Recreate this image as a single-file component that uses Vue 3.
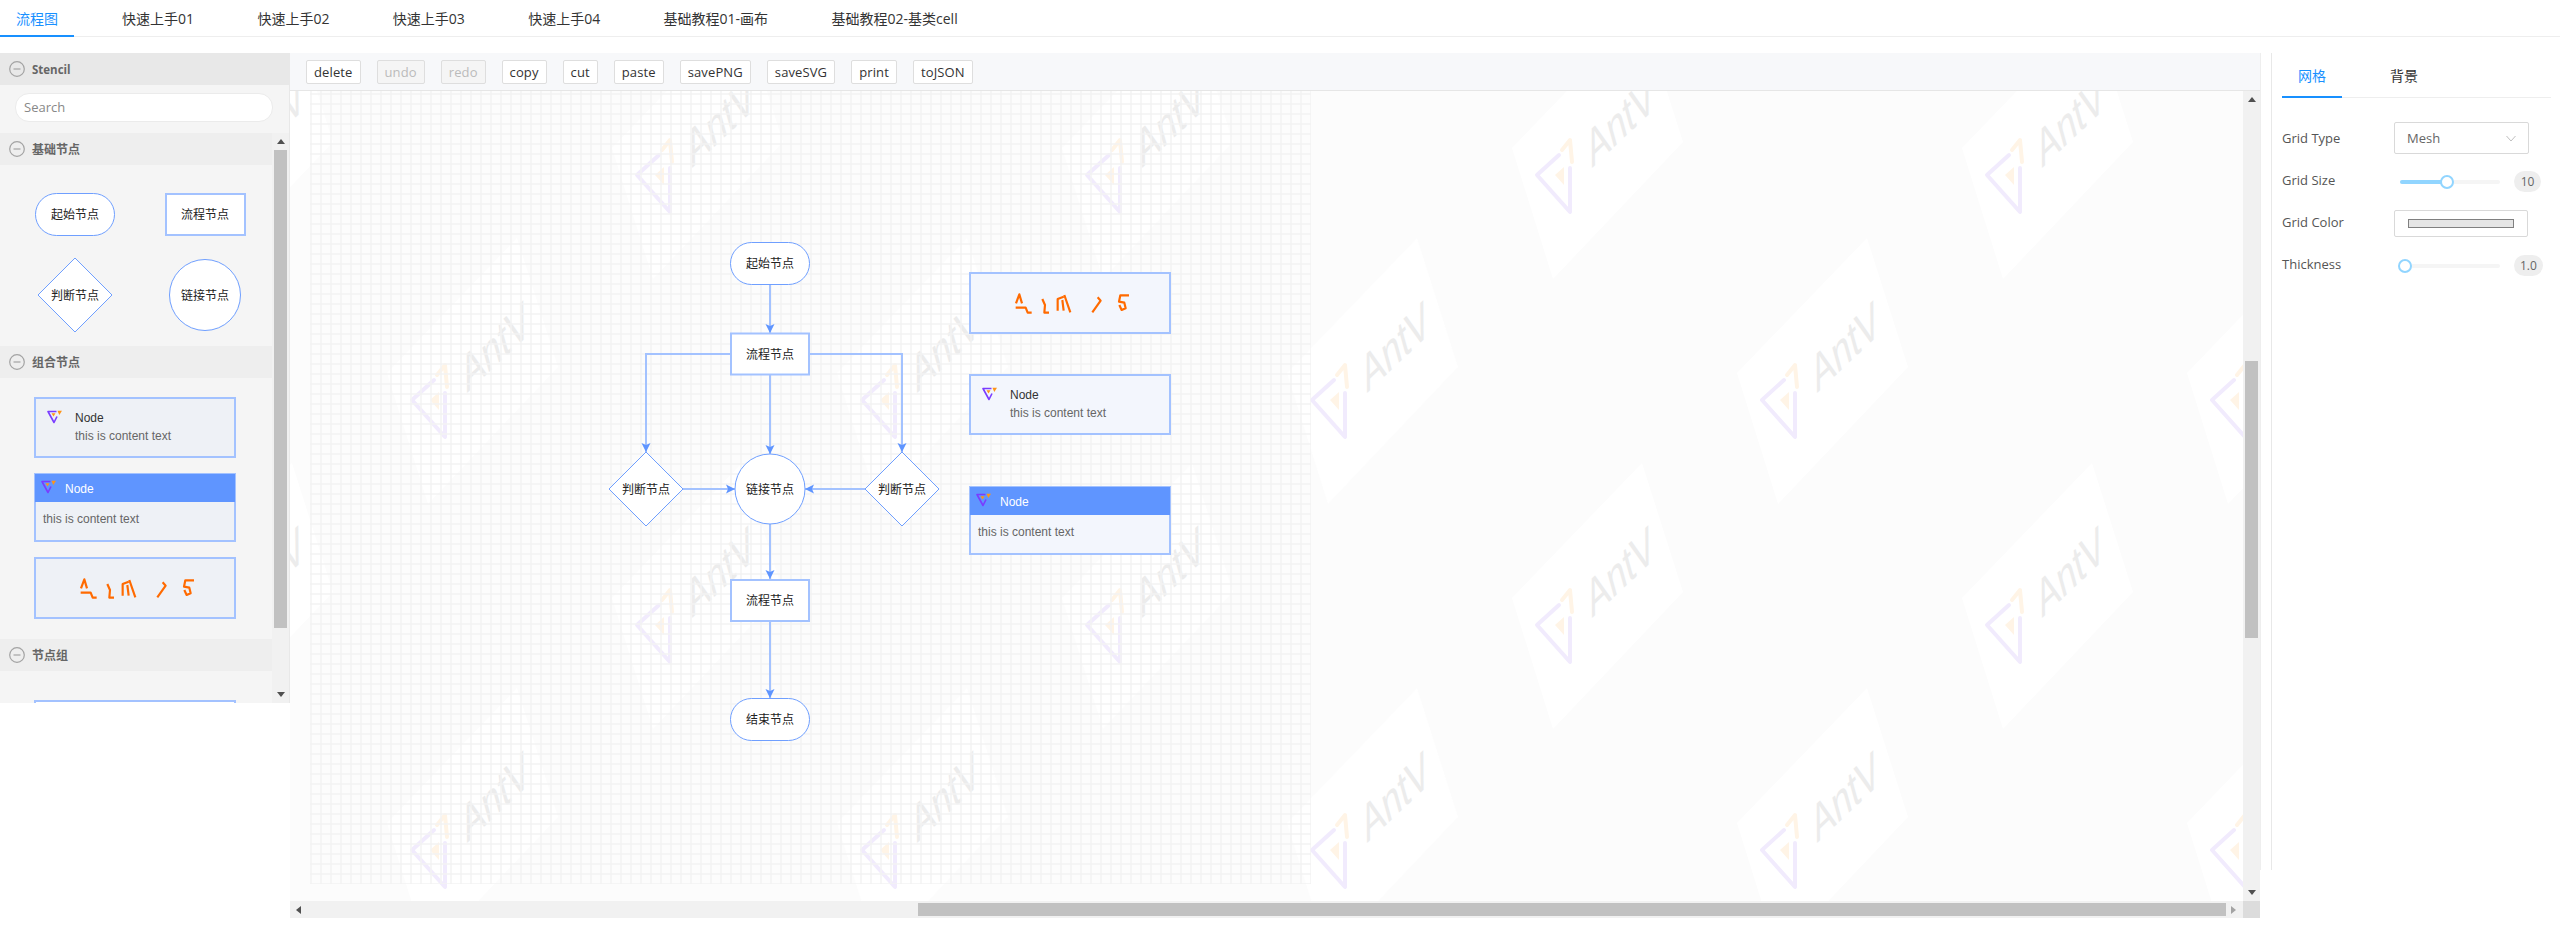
<script setup>
const topTabs = ['流程图', '快速上手01', '快速上手02', '快速上手03', '快速上手04', '基础教程01-画布', '基础教程02-基类cell']
const tools = [
  { label: 'delete' }, { label: 'undo', off: true }, { label: 'redo', off: true },
  { label: 'copy' }, { label: 'cut' }, { label: 'paste' },
  { label: 'savePNG' }, { label: 'saveSVG' }, { label: 'print' }, { label: 'toJSON' }
]

const columns = [187, 637, 1087, 1537, 1987]
const shifted = [412, 862, 1312, 1762, 2212]
const tiles = [
  ...columns.map((x) => ({ x, y: 175 })),
  ...shifted.map((x) => ({ x, y: 400 })),
  ...columns.map((x) => ({ x, y: 625 })),
  ...shifted.map((x) => ({ x, y: 850 }))
]

const stencilBasic = [
  { type: 'term', x: 75, y: 214.5, label: '起始节点' },
  { type: 'rect', x: 205, y: 214.5, label: '流程节点' },
  { type: 'diamond', x: 75, y: 295, label: '判断节点' },
  { type: 'circle', x: 205, y: 295, label: '链接节点' }
]
const flowNodes = [
  { type: 'term', x: 770, y: 263.5, label: '起始节点' },
  { type: 'rect', x: 770, y: 354, label: '流程节点' },
  { type: 'diamond', x: 646, y: 489, label: '判断节点' },
  { type: 'circle', x: 770, y: 489, label: '链接节点' },
  { type: 'diamond', x: 902, y: 489, label: '判断节点' },
  { type: 'rect', x: 770, y: 600.5, label: '流程节点' },
  { type: 'term', x: 770, y: 719.5, label: '结束节点' }
]
const edges = [
  'M770 285V333', 'M730 354H646V452', 'M810 354H902V452', 'M770 375V454',
  'M682 489H735', 'M865 489H805', 'M770 524V579', 'M770 622V698'
]
const diamond = (n) => `${n.x - 37},${n.y} ${n.x},${n.y - 37} ${n.x + 37},${n.y} ${n.x},${n.y + 37}`

const gridType = 'Mesh'
const gridSize = { value: '10', percent: 47 }
const thickness = { value: '1.0', percent: 5 }
</script>

<template>
  <div class="page">
    <nav class="topbar">
      <a v-for="(t, i) in topTabs" :key="t" class="toptab" :class="{ on: i === 0 }">{{ t }}</a>
    </nav>

    <div class="spacer"></div>

    <main class="body">
      <aside class="stencil">
        <header class="stencil-title">
          <svg class="fold" viewBox="0 0 16 16"><circle cx="8" cy="8" r="7.3" /><path d="M4.5 8h7" /></svg>
          <span class="stencil-name">Stencil</span>
        </header>
        <div class="search"><div class="search-box">Search</div></div>
        <div class="stencil-scroll">
          <div class="groups">
            <section>
              <header class="group-title">
                <svg class="fold" viewBox="0 0 16 16"><circle cx="8" cy="8" r="7.3" /><path d="M4.5 8h7" /></svg>
                <span>基础节点</span>
              </header>
              <svg class="group-body" width="272" height="181" viewBox="0 165 272 181">
                <g v-for="n in stencilBasic" :key="n.label">
                  <rect v-if="n.type === 'term'" class="thin" :x="n.x - 39.5" :y="n.y - 21" width="79" height="42" rx="21" />
                  <rect v-if="n.type === 'rect'" class="thick" :x="n.x - 39" :y="n.y - 20.5" width="79" height="41" />
                  <polygon v-if="n.type === 'diamond'" class="thin" :points="diamond(n)" />
                  <circle v-if="n.type === 'circle'" class="thin" :cx="n.x" :cy="n.y" r="35.5" />
                  <text class="node-label" :x="n.x" :y="n.y - 1">{{ n.label }}</text>
                </g>
              </svg>
            </section>
            <section>
              <header class="group-title">
                <svg class="fold" viewBox="0 0 16 16"><circle cx="8" cy="8" r="7.3" /><path d="M4.5 8h7" /></svg>
                <span>组合节点</span>
              </header>
              <svg class="group-body" width="272" height="261" viewBox="0 378 272 261">
                <use href="#card-a" x="34" y="397" fill="#eef1f6" />
                <use href="#card-b" x="34" y="473" fill="#eef1f6" />
                <use href="#card-c" x="34" y="557" fill="#eef1f6" />
              </svg>
            </section>
            <section>
              <header class="group-title">
                <svg class="fold" viewBox="0 0 16 16"><circle cx="8" cy="8" r="7.3" /><path d="M4.5 8h7" /></svg>
                <span>节点组</span>
              </header>
              <svg class="group-body" width="272" height="32" viewBox="0 671 272 32">
                <rect class="thick" x="35" y="701" width="200" height="60" />
              </svg>
            </section>
          </div>
          <div class="vbar stencil-bar">
            <i class="arrow up"></i>
            <b class="thumb stencil-thumb"></b>
            <i class="arrow down push"></i>
          </div>
        </div>
      </aside>

      <section class="editor">
        <div class="toolbar">
          <button v-for="t in tools" :key="t.label" class="tool" :class="{ off: t.off }">{{ t.label }}</button>
        </div>
        <div class="scroller">
          <svg class="canvas" width="1953" height="810" viewBox="290 91 1953 810">
            <defs>
              <pattern id="grid" x="310" y="93" width="10" height="10" patternUnits="userSpaceOnUse">
                <path d="M1 0V10M0 1H10" fill="none" stroke="#f3f3f3" stroke-width="1.5" />
              </pattern>
              <marker id="tip" viewBox="0 -5 10 10" refX="9" refY="0" markerWidth="10" markerHeight="10" markerUnits="userSpaceOnUse" orient="auto">
                <path d="M0-4.5L9 0L0 4.5L2 0Z" fill="#5f95ff" />
              </marker>
              <g id="mark">
                <path d="M9.5 1.5H1L7 12.5L10 6.5" fill="none" stroke="#7a3cff" stroke-width="1.6" stroke-linejoin="round" />
                <path d="M10.5 .7H15L12.3 5Z" fill="#ff9416" />
                <path d="M4.5 3.2H8.5L6.5 6.5Z" fill="#ff9416" />
              </g>
              <g id="broken-logo" transform="translate(36 8) scale(.3333)" fill="none" stroke="#ff6a00" stroke-width="6.5" stroke-linejoin="round">
                <path d="M33 70L43 43L51 70M32 83H62L68 98H80" />
                <path d="M112 57L120 75L118 98H132" />
                <path d="M158 92V57L176 50M176 92L172 60M178 45L196 97" />
                <path d="M278 52L287 62L262 97" />
                <path d="M372 46H346L342 65L358 68L362 85L350 90L343 75" />
              </g>
              <g id="card-a">
                <rect class="thick card-box" x="1" y="1" width="200" height="59" />
                <use href="#mark" x="13" y="13" />
                <text class="card-title" x="41" y="21">Node</text>
                <text class="card-text" x="41" y="39">this is content text</text>
              </g>
              <g id="card-b">
                <rect class="thick card-box" x="1" y="1" width="200" height="67" />
                <rect x="1" y="1" width="200" height="28" fill="#5f95ff" />
                <use href="#mark" x="7" y="7" />
                <text class="card-head" x="31" y="16">Node</text>
                <text class="card-text" x="9" y="46">this is content text</text>
              </g>
              <g id="card-c">
                <rect class="thick card-box" x="1" y="1" width="200" height="60" />
                <use href="#broken-logo" />
              </g>
              <g id="tile">
                <polygon points="-25,-27 105,-162 146,-33 16,104" fill="#fff" />
                <path d="M22-20L0 0L33 37V-7" fill="none" stroke="#f1ebfd" stroke-width="4" stroke-linecap="round" stroke-linejoin="round" />
                <path d="M25-25L33-35L35-13" fill="none" stroke="#fff4e6" stroke-width="4" stroke-linecap="round" stroke-linejoin="round" />
                <path d="M18 0L27-8V10Z" fill="#fff4e6" />
                <text class="mark-text" transform="matrix(1 -.945 .42 1.53 55 -7)">AntV</text>
              </g>
            </defs>

            <rect x="290" y="91" width="1953" height="810" fill="#fcfcfc" />
            <use v-for="t in tiles" :key="t.x + '-' + t.y" href="#tile" :x="t.x" :y="t.y" />
            <rect x="310" y="91" width="1001" height="793" fill="url(#grid)" />

            <path v-for="d in edges" :key="d" class="edge" :d="d" marker-end="url(#tip)" />
            <g v-for="n in flowNodes" :key="n.x + '' + n.y">
              <rect v-if="n.type === 'term'" class="thin" :x="n.x - 39.5" :y="n.y - 21" width="79" height="42" rx="21" />
              <rect v-if="n.type === 'rect'" class="thick" :x="n.x - 39" :y="n.y - 20.5" width="78" height="41" />
              <polygon v-if="n.type === 'diamond'" class="thin" :points="diamond(n)" />
              <circle v-if="n.type === 'circle'" class="thin" :cx="n.x" :cy="n.y" r="35" />
              <text class="node-label" :x="n.x" :y="n.y - 1">{{ n.label }}</text>
            </g>

            <use href="#card-c" x="969" y="272" fill="#f3f6fd" />
            <use href="#card-a" x="969" y="374" fill="#f3f6fd" />
            <use href="#card-b" x="969" y="486" fill="#f3f6fd" />
          </svg>
          <div class="vbar">
            <i class="arrow up"></i>
            <b class="thumb canvas-thumb"></b>
            <i class="arrow down push"></i>
          </div>
          <div class="hbar">
            <i class="arrow left"></i>
            <b class="hthumb"></b>
            <i class="arrow right"></i>
          </div>
          <div class="corner"></div>
        </div>
      </section>

      <aside class="panel">
        <div class="panel-tabs">
          <a class="panel-tab on">网格</a>
          <a class="panel-tab">背景</a>
        </div>
        <div class="row row-select">
          <label>Grid Type</label>
          <div class="select">
            <span>{{ gridType }}</span>
            <svg width="10" height="7" viewBox="0 0 10 7"><path d="M.5 1L5 6L9.5 1" fill="none" stroke="#bfbfbf" /></svg>
          </div>
        </div>
        <div class="row row-slider">
          <label class="lift">Grid Size</label>
          <div class="slider">
            <div class="fill" :style="{ width: gridSize.percent + '%' }"></div>
            <div class="knob" :style="{ left: gridSize.percent + '%' }"></div>
          </div>
          <span class="badge">{{ gridSize.value }}</span>
        </div>
        <div class="row row-color">
          <label class="lift">Grid Color</label>
          <div class="color"><div class="swatch"></div></div>
        </div>
        <div class="row row-slider">
          <label class="lift">Thickness</label>
          <div class="slider">
            <div class="knob" :style="{ left: thickness.percent + '%' }"></div>
          </div>
          <span class="badge">{{ thickness.value }}</span>
        </div>
      </aside>
    </main>
  </div>
</template>

<style>
html, body { margin: 0; background: #fff; overflow: hidden; }
</style>

<style scoped>
.page {
  width: 2560px;
  height: 937px;
  overflow: hidden;
  background: #fff;
  font-family: "Open Sans", "Noto Sans CJK SC", sans-serif;
  font-size: 13px;
  color: #333;
}
.topbar {
  display: flex;
  align-items: flex-start;
  gap: 31.4px;
  height: 37px;
  box-sizing: border-box;
  border-bottom: 1px solid #eee;
}
.toptab {
  box-sizing: border-box;
  height: 37px;
  padding: 8px 16px 5px;
  font-size: 14px;
  line-height: 22px;
  color: #333;
  white-space: nowrap;
}
.toptab.on { color: #1890ff; border-bottom: 2px solid #1890ff; margin-right: .6px; }
.spacer { height: 16px; }
.body { display: flex; height: 817px; }

.stencil {
  flex: none;
  box-sizing: border-box;
  width: 290px;
  height: 650px;
  border-right: 1px solid #e8e8e8;
  background: #f5f5f5;
  display: flex;
  flex-direction: column;
}
.stencil-title, .group-title {
  display: flex;
  align-items: center;
  gap: 7px;
  height: 32px;
  padding-left: 9px;
  flex: none;
  font-weight: 700;
  color: #666;
  font-size: 12px;
}
.stencil-title { background: #e8e8e8; margin-right: -1px; }
.stencil-name { font-size: 11.5px; }
.group-title { background: #eee; }
.fold { width: 16px; height: 16px; flex: none; fill: none; stroke: #a3a3a3; stroke-width: 1.2; }
.search { height: 48px; flex: none; padding: 8px 16px 0 15px; box-sizing: border-box; }
.search-box {
  box-sizing: border-box;
  height: 29px;
  line-height: 27px;
  padding-left: 8px;
  border: 1px solid #ebebeb;
  border-radius: 14px;
  background: #fff;
  color: #888;
}
.stencil-scroll { flex: 1; min-height: 0; display: flex; overflow: hidden; }
.groups { width: 272px; flex: none; overflow: hidden; }
.group-body { display: block; }

.vbar {
  width: 17px;
  background: #f1f1f1;
  display: flex;
  flex-direction: column;
  align-items: center;
}
.stencil-bar { flex: none; }
.thumb { width: 13px; background: #c1c1c1; display: block; flex: none; }
.stencil-thumb { height: 478px; margin-top: 0; }
.canvas-thumb { height: 277px; margin-top: 253px; }
.arrow { display: block; flex: none; width: 0; height: 0; border: 4px solid transparent; }
.arrow.up { border-top-width: 0; border-bottom: 5px solid #505050; margin: 6px 0 6px; }
.arrow.down { border-bottom-width: 0; border-top: 5px solid #505050; margin: 0 0 6px; }
.arrow.push { margin-top: auto; }
.arrow.left { border-left-width: 0; border-right: 5px solid #505050; margin: 0 6px; }
.arrow.right { border-right-width: 0; border-left: 5px solid #a3a3a3; margin: 0 4px 0 5px; }

.editor {
  flex: none;
  box-sizing: border-box;
  width: 1971px;
  border-right: 1px solid #eee;
  height: 817px;
}
.toolbar {
  box-sizing: border-box;
  height: 38px;
  padding: 7px 16px 0;
  display: flex;
  gap: 16px;
  background: #f7f8fa;
  border-bottom: 1px solid #e6e6e6;
}
.tool {
  box-sizing: border-box;
  height: 24px;
  padding: 0 7px;
  border: 1px solid #dedede;
  border-radius: 2px;
  background: #fff;
  font: inherit;
  font-size: 13px;
  line-height: 22px;
  letter-spacing: .12px;
  color: #333;
}
.tool.off { background: #f5f5f5; color: #bbb; }
.scroller {
  display: grid;
  grid-template-columns: 1953px 17px;
  grid-template-rows: 810px 17px;
}
.canvas { display: block; }
.hbar { background: #f1f1f1; display: flex; align-items: center; }
.hthumb { margin-left: 611px; width: 1308px; height: 13px; background: #c1c1c1; display: block; flex: none; }
.corner { background: #dcdcdc; }

.panel {
  flex: none;
  box-sizing: border-box;
  width: 289px;
  margin-left: 10px;
  padding: 0 9px 0 10px;
  border-left: 1px solid #e8e8e8;
}
.panel-tabs { display: flex; gap: 32px; height: 45px; box-sizing: border-box; border-bottom: 1px solid #eee; align-items: flex-start; }
.panel-tab {
  box-sizing: border-box;
  height: 45px;
  padding: 12px 16px 0;
  font-size: 14px;
  line-height: 22px;
  color: #333;
}
.panel-tab.on { color: #1890ff; border-bottom: 2px solid #1890ff; }
.row { display: flex; align-items: center; }
.row label { width: 112px; flex: none; color: #555; }
.row .lift { margin-bottom: 3px; }
.row-select { height: 32px; margin-top: 24px; }
.row-slider { height: 21px; margin-top: 17px; }
.row-color { height: 27px; margin-top: 18px; }
.row-color + .row-slider { margin-top: 18px; }
.select {
  box-sizing: border-box;
  width: 135px;
  height: 32px;
  padding: 0 12px;
  border: 1px solid #d9d9d9;
  border-radius: 2px;
  display: flex;
  align-items: center;
  justify-content: space-between;
  color: #666;
}
.slider {
  position: relative;
  width: 100px;
  height: 4px;
  margin: 0 14px 0 6px;
  border-radius: 2px;
  background: #f5f5f5;
}
.fill { height: 4px; border-radius: 2px; background: #91d5ff; }
.knob {
  position: absolute;
  top: -5px;
  width: 14px;
  height: 14px;
  margin-left: -7px;
  box-sizing: border-box;
  border: 2px solid #91d5ff;
  border-radius: 50%;
  background: #fff;
}
.badge {
  box-sizing: border-box;
  min-width: 27px;
  height: 21px;
  padding: 0 6px;
  border-radius: 11px;
  background: #eee;
  font-size: 12px;
  line-height: 21px;
  text-align: center;
  color: #666;
}
.color {
  box-sizing: border-box;
  width: 134px;
  height: 27px;
  padding: 8px 13px;
  border: 1px solid #d9d9d9;
  border-radius: 2px;
}
.swatch { box-sizing: border-box; width: 106px; height: 9px; border: 1px solid #808080; background: #e5e5e5; }

.thin { fill: #fff; stroke: #6f9fff; stroke-width: 1; }
.thick { fill: #fff; stroke: #a3c2ff; stroke-width: 2; }
.thick.card-box { fill: inherit; }
.edge { fill: none; stroke: #a3c2ff; stroke-width: 2; }
.node-label {
  font-family: "Noto Sans CJK SC", sans-serif;
  font-size: 12px;
  fill: #222;
  text-anchor: middle;
  dominant-baseline: central;
}
.card-title, .card-text, .card-head {
  font-family: "Liberation Sans", sans-serif;
  font-size: 12px;
  dominant-baseline: central;
}
.card-title { fill: #333; }
.card-text { fill: #666; }
.card-head { fill: #fff; }
.mark-text {
  font-family: "Liberation Sans", sans-serif;
  font-size: 30px;
  fill: #ececec;
}
</style>
